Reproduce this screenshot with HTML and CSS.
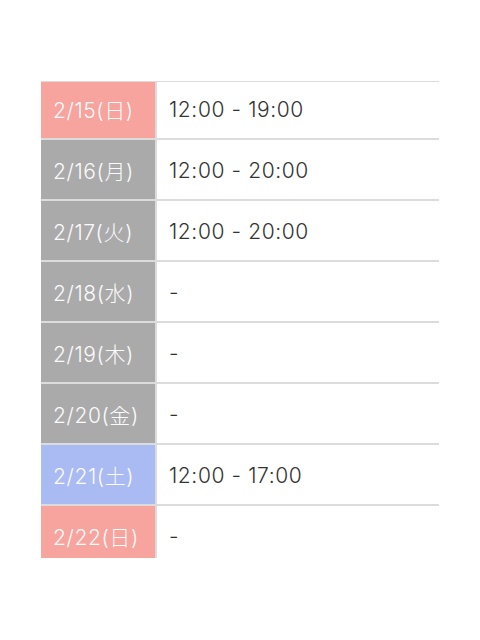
FILE: index.html
```html
<!DOCTYPE html>
<html lang="ja">
<head>
<meta charset="utf-8">
<link rel="stylesheet" href="styles.css">
</head>
<body>
<div class="frame">
  <div class="list">
    <div class="row"><div class="day sun">2/15(日)</div><div class="hours">12:00 - 19:00</div></div>
    <div class="row"><div class="day">2/16(月)</div><div class="hours">12:00 - 20:00</div></div>
    <div class="row"><div class="day">2/17(火)</div><div class="hours">12:00 - 20:00</div></div>
    <div class="row"><div class="day">2/18(水)</div><div class="hours">-</div></div>
    <div class="row"><div class="day">2/19(木)</div><div class="hours">-</div></div>
    <div class="row"><div class="day">2/20(金)</div><div class="hours">-</div></div>
    <div class="row"><div class="day sat">2/21(土)</div><div class="hours">12:00 - 17:00</div></div>
    <div class="row"><div class="day sun">2/22(日)</div><div class="hours">-</div></div>
  </div>
</div>
</body>
</html>
```
FILE: styles.css
```css
html, body {
  margin: 0;
  padding: 0;
  background: #ffffff;
}
body {
  font-family: Inter, "Noto Sans CJK JP", sans-serif;
  font-size: 21px;
  font-weight: 300;
  letter-spacing: 0.6px;
}
.frame {
  margin: 81px 0 0 41px;
  width: 398px;
  height: 476px;
  border-top: 1px solid #dcdcdc;
  overflow: hidden;
}
.list {
  margin-top: -3px;
  display: flex;
  flex-direction: column;
}
.row {
  display: grid;
  grid-template-columns: 116px 1fr;
  height: 59px;
  border-bottom: 2px solid #dcdcdc;
}
.day {
  display: flex;
  align-items: center;
  padding-left: 12px;
  padding-top: 1px;
  background: #aaaaaa;
  color: #fbfbfb;
  border-right: 2px solid #dcdcdc;
}
.day.sun {
  background: #f6a49d;
}
.day.sat {
  background: #aabaf3;
}
.hours {
  display: flex;
  align-items: center;
  padding-left: 12px;
  padding-top: 1px;
  color: #333333;
}
```
